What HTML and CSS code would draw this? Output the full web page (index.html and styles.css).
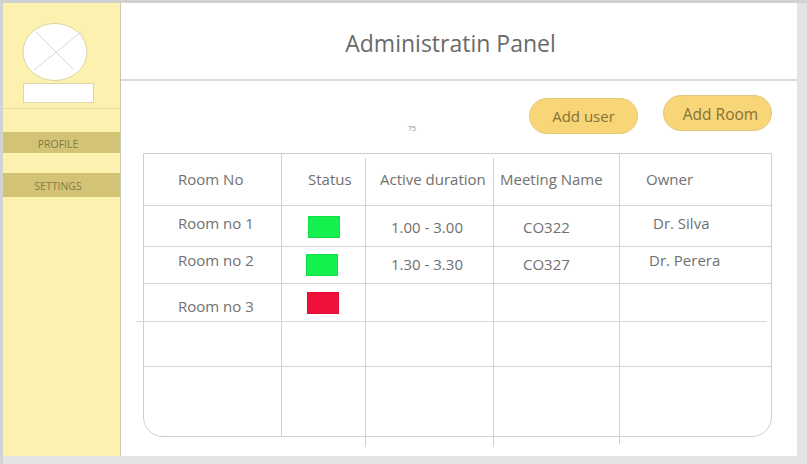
FILE: index.html
```html
<!DOCTYPE html>
<html lang="en">
<head>
    <meta charset="UTF-8">
    <meta name="viewport" content="width=device-width, initial-scale=1.0">
    <title>Administratin Panel</title>
    <link rel="stylesheet" href="styles.css">
</head>
<body>

<div class="frame">
    <aside class="sidebar">
        <div class="user-box">
            <svg class="avatar" width="67" height="59" viewBox="0 0 67 59">
                <ellipse cx="33" cy="29" rx="32" ry="28.5" fill="#fff" stroke="#dcd3a4"/>
                <path d="M14 9 L52 47 M59 9 L12 47" stroke="#d9d9d9" fill="none"/>
            </svg>
            <div class="user-name"></div>
        </div>
        <div class="nav-item nav-profile">PROFILE</div>
        <div class="nav-item nav-settings">SETTINGS</div>
    </aside>

    <main class="content">
        <h1 class="title">Administratin Panel</h1>

        <div class="toolbar">
            <span class="tiny">75</span>
            <button class="btn btn-user">Add user</button>
            <button class="btn btn-room">Add Room</button>
        </div>

        <div class="table-wrap">
            <table class="rooms">
                <colgroup>
                    <col class="col-room">
                    <col class="col-status">
                    <col class="col-time">
                    <col class="col-meeting">
                    <col class="col-owner">
                </colgroup>
                <thead>
                    <tr>
                        <th class="c-room">Room No</th>
                        <th class="c-status">Status</th>
                        <th class="c-time">Active duration</th>
                        <th class="c-meeting">Meeting Name</th>
                        <th class="c-owner">Owner</th>
                    </tr>
                </thead>
                <tbody>
                    <tr class="row-1">
                        <td class="c-room">Room no 1</td>
                        <td class="c-status"><div class="swatch green"></div></td>
                        <td class="c-time low">1.00 - 3.00</td>
                        <td class="c-meeting low">CO322</td>
                        <td class="c-owner silva">Dr. Silva</td>
                    </tr>
                    <tr class="row-2">
                        <td class="c-room">Room no 2</td>
                        <td class="c-status"><div class="swatch green"></div></td>
                        <td class="c-time low">1.30 - 3.30</td>
                        <td class="c-meeting low">CO327</td>
                        <td class="c-owner">Dr. Perera</td>
                    </tr>
                    <tr class="row-3">
                        <td class="c-room">Room no 3</td>
                        <td class="c-status"><div class="swatch red"></div></td>
                        <td></td>
                        <td></td>
                        <td></td>
                    </tr>
                    <tr class="row-4"><td></td><td></td><td></td><td></td><td></td></tr>
                    <tr class="row-5"><td></td><td></td><td></td><td></td><td></td></tr>
                </tbody>
            </table>

            <!-- hand drawn lines that run past the table edge -->
            <div class="vline v1"></div>
            <div class="vline v2"></div>
            <div class="vline v3"></div>
            <div class="vline v4"></div>
            <div class="hline"></div>
        </div>
    </main>
</div>

</body>
</html>
```

FILE: styles.css
```css
/* Basic styling for the page */
html, body {
    height: 100%;
}
body {
    font-family: "Open Sans", Arial, sans-serif;
    background-color: #e4e4e4;
    color: #707070;
    margin: 0;
    padding: 0 10px 8px 0;
    box-sizing: border-box;
    height: 464px;
    overflow: hidden;
    border-top: 3px solid #d2d2d2;
    border-left: 3px solid #d2d2d2;
}
.frame {
    display: flex;
    height: 100%;
    background-color: #fff;
}

/* Sidebar */
.sidebar {
    width: 117px;
    flex: none;
    background-color: #fdf1b0;
    border-right: 1px solid #c9c8b4;
}
.user-box {
    height: 85px;
    padding: 20px 0 0 19px;
    border-bottom: 1px solid #e6dba0;
}
.avatar {
    display: block;
}
.user-name {
    width: 69px;
    height: 18px;
    margin: 1px 0 0 1px;
    background-color: #fff;
    border: 1px solid #dcd6ae;
}
.nav-item {
    display: flex;
    align-items: center;
    justify-content: center;
    padding-right: 7px;
    background-color: #d2c474;
    color: #83794c;
    font-size: 10.5px;
}
.nav-profile {
    height: 21px;
    margin-top: 23px;
    padding-top: 3px;
    box-sizing: border-box;
}
.nav-settings {
    height: 24px;
    margin-top: 20px;
    padding-top: 2px;
    box-sizing: border-box;
}

/* Main area */
.content {
    flex: 1;
    min-width: 0;
}
.title {
    height: 76px;
    line-height: 80px;
    margin: 0;
    padding-right: 17px;
    font-size: 23px;
    font-weight: 400;
    text-align: center;
    color: #6a6a6a;
    border-bottom: 2px solid #dadada;
}
.toolbar {
    display: flex;
    align-items: flex-start;
    height: 72px;
    padding: 0 25px 0 287px;
    box-sizing: border-box;
}
.tiny {
    margin-top: 43px;
    margin-right: auto;
    font-size: 7px;
    color: #8a8a8a;
}
.btn {
    width: 109px;
    height: 36px;
    padding: 0;
    font-family: inherit;
    font-size: 15px;
    color: #85713a;
    background-color: #f8d576;
    border: 1px solid #e2c77c;
    border-radius: 18px;
}
.btn-user {
    margin-top: 17px;
    margin-right: 25px;
}
.btn-room {
    margin-top: 14px;
    padding: 2px 0 0 6px;
    font-size: 15.5px;
}

/* Room table */
.table-wrap {
    position: relative;
    width: 629px;
    height: 284px;
    margin-left: 22px;
    box-sizing: border-box;
    border: 1px solid #cfcfcf;
    border-radius: 0 0 20px 20px;
}
.rooms {
    width: 100%;
    border-collapse: collapse;
    table-layout: fixed;
    font-size: 15px;
}
.col-room { width: 138px; }
.col-status { width: 84px; }
.col-time { width: 128px; }
.col-meeting { width: 126px; }
th, td {
    padding: 0;
    text-align: left;
    font-weight: 400;
    vertical-align: top;
    line-height: 20px;
    border-bottom: 1px solid #d4d4d4;
}
th {
    height: 51px;
    padding-top: 15px;
    box-sizing: border-box;
}
.c-room { padding-left: 34px; }
.c-status { padding-left: 26px; }
.c-time { padding-left: 14px; }
.c-meeting { padding-left: 6px; }
.c-owner { padding-left: 26px; }

td.c-time { padding-left: 25px; }
td.c-meeting { padding-left: 29px; }
td.c-owner { padding-left: 29px; }
td.c-owner.silva { padding-left: 33px; }

.row-1 td { height: 41px; padding-top: 7px; box-sizing: border-box; }
.row-2 td { height: 37px; padding-top: 3px; box-sizing: border-box; }
.row-3 td { height: 38px; padding-top: 12px; box-sizing: border-box; border-bottom: none; }
.row-4 td { height: 45px; }
.row-5 td { border-bottom: none; }

.row-1 td.low { padding-top: 11px; }
.row-2 td.low { padding-top: 7px; }
.row-1 td.c-status { padding-top: 10px; }
.row-2 td.c-status { padding-top: 7px; padding-left: 24px; }
.row-3 td.c-status { padding-top: 8px; padding-left: 25px; }

.swatch {
    width: 32px;
    height: 22px;
    box-sizing: border-box;
    border: 1px solid rgba(0, 0, 0, 0.08);
}
.green { background-color: #14f14f; }
.red { background-color: #f0103a; }

.vline {
    position: absolute;
    width: 1px;
    background-color: #d2d2d2;
}
.v1 { left: 137px; top: 0; height: 283px; }
.v2 { left: 221px; top: 4px; height: 289px; }
.v3 { left: 349px; top: 4px; height: 289px; }
.v4 { left: 475px; top: 0; height: 290px; }
.hline {
    position: absolute;
    left: -8px;
    top: 167px;
    width: 631px;
    height: 1px;
    background-color: #d8d8d8;
}
```
